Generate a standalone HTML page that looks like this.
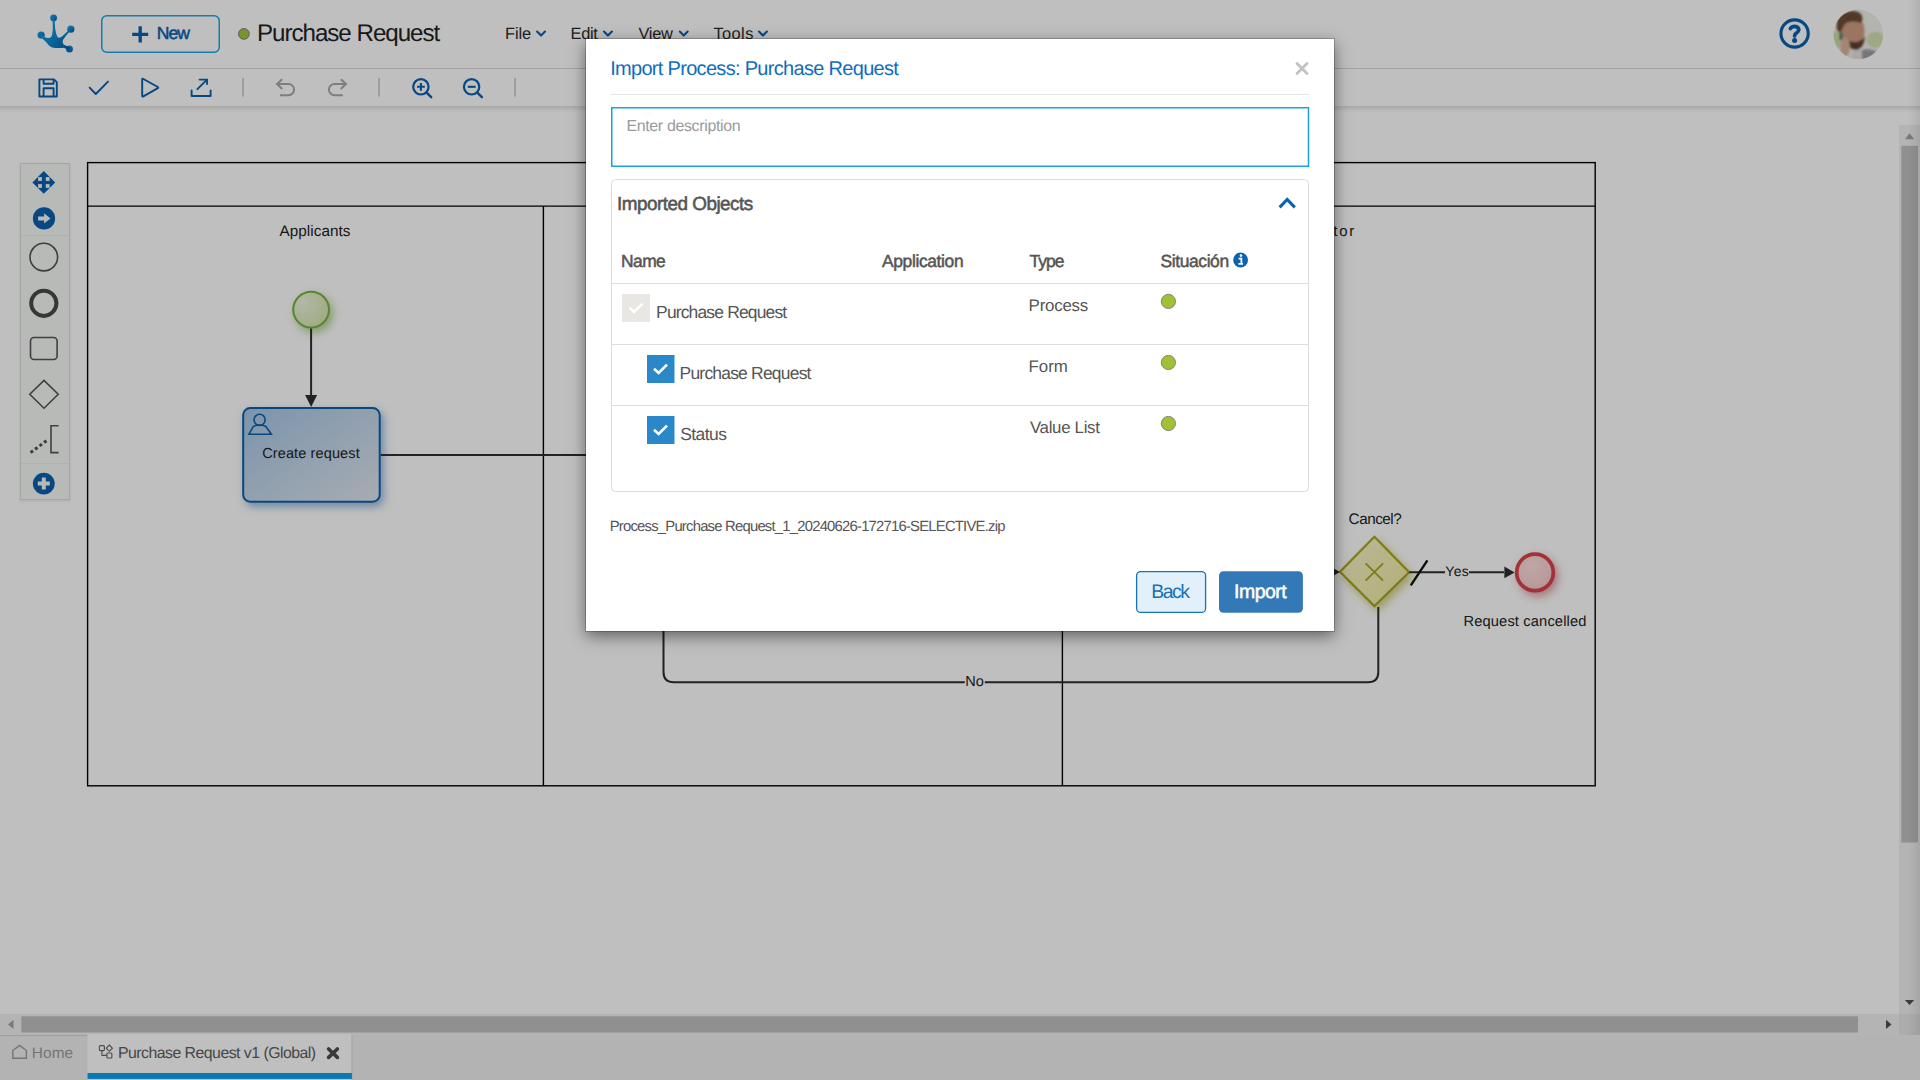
<!DOCTYPE html>
<html><head><meta charset="utf-8">
<style>
*{margin:0;padding:0;box-sizing:border-box}
html,body{width:1920px;height:1080px;overflow:hidden;background:#fff}
svg{position:absolute;left:0;top:0;font-family:"Liberation Sans",sans-serif}
text{text-rendering:geometricPrecision}
#tbsh{position:absolute;left:0;top:106px;width:1920px;height:6px;background:linear-gradient(rgba(0,0,0,.12),rgba(0,0,0,0))}
#pal{position:absolute;left:20px;top:163px;width:50px;height:337px;box-shadow:0 1px 3px rgba(0,0,0,.1)}
#ov{position:absolute;left:0;top:0;width:1920px;height:1080px;background:rgba(0,0,0,.25)}
#md{position:absolute;left:586px;top:39px;width:748px;height:592px;background:#fff;box-shadow:0 5px 15px rgba(0,0,0,.5);outline:1px solid rgba(0,0,0,.2)}
</style></head><body>
<div id="pal"></div>
<svg width="1920" height="1080" viewBox="0 0 1920 1080">
<rect x="0" y="0" width="1920" height="68" fill="#fff"/>
<rect x="0" y="68" width="1920" height="1" fill="#d9d9d9"/>
<g transform="translate(25,5)">
<defs><linearGradient id="lg" x1="0" y1="0" x2="1" y2="1"><stop offset="0" stop-color="#22a6e6"/><stop offset="0.55" stop-color="#0a86cc"/><stop offset="1" stop-color="#0a4f9e"/></linearGradient></defs>
<g fill="url(#lg)">
<circle cx="28.6" cy="13" r="3.4"/><circle cx="16.1" cy="30" r="3.6"/><circle cx="45.8" cy="24.2" r="3.6"/><circle cx="44.4" cy="43.9" r="3.5"/>
<path d="M27.6 15 L27.8 22 Q27.7 29 26.5 31.5 Q25 33.5 22 33 Q19.5 32.5 17 29.5 L15.5 32 Q19 35 21.5 37.5 Q24.5 42 28.5 42.8 Q33 43.3 38.5 42.8 Q42 43.5 43.5 46.5 L45.5 42 Q41.5 41 38.5 39.5 Q36.8 37.5 38 35 Q40 31.5 44.5 26.5 L46.5 23 Q41 27.5 37 31.5 Q34.5 33.5 32.5 32 Q31.3 30 30.2 24 L29.6 15 Z"/>
</g></g>
<rect x="101.75" y="15.75" width="117.5" height="36.5" rx="5" fill="none" stroke="#18a8e8" stroke-width="1.5"/>
<path d="M132.2 34.4 H148.2 M140.2 26.3 V42.5" stroke="#0a5fae" stroke-width="3.3" stroke-linecap="butt" fill="none"/>
<text x="156.76" y="39.20" font-size="17.59" fill="#0a5fae" stroke="#0a5fae" stroke-width="0.5" textLength="33.20" lengthAdjust="spacing">New</text>
<circle cx="243.9" cy="33.9" r="5.4" fill="#a2c53c" stroke="#777" stroke-width="0.9"/>
<text x="256.92" y="40.70" font-size="24.13" fill="#222" textLength="183.36" lengthAdjust="spacing">Purchase Request</text>
<text x="505.05" y="38.80" font-size="16.42" fill="#2b2b2b" textLength="26.08" lengthAdjust="spacing">File</text>
<path d="M537.0999999999999 31.6 L541.05 35.6 L545.0 31.6" fill="none" stroke="#0a5fae" stroke-width="2.1" stroke-linecap="round" stroke-linejoin="round"/>
<text x="570.55" y="38.80" font-size="16.42" fill="#2b2b2b" textLength="27.37" lengthAdjust="spacing">Edit</text>
<path d="M604.0 31.6 L607.95 35.6 L611.9000000000001 31.6" fill="none" stroke="#0a5fae" stroke-width="2.1" stroke-linecap="round" stroke-linejoin="round"/>
<text x="638.53" y="38.80" font-size="16.42" fill="#2b2b2b" textLength="34.33" lengthAdjust="spacing">View</text>
<path d="M679.8 31.6 L683.75 35.6 L687.7 31.6" fill="none" stroke="#0a5fae" stroke-width="2.1" stroke-linecap="round" stroke-linejoin="round"/>
<text x="713.43" y="38.80" font-size="16.42" fill="#2b2b2b" textLength="39.96" lengthAdjust="spacing">Tools</text>
<path d="M759.0 31.6 L762.95 35.6 L766.9000000000001 31.6" fill="none" stroke="#0a5fae" stroke-width="2.1" stroke-linecap="round" stroke-linejoin="round"/>
<circle cx="1794.6" cy="33.5" r="13.65" fill="none" stroke="#0a5fae" stroke-width="3.1"/>
<path d="M1790.4 28.6 Q1791.8 26.4 1794.7 26.4 Q1798.6 26.6 1798.8 29.8 Q1798.8 31.6 1796.6 32.9 Q1794.6 34 1794.6 36" fill="none" stroke="#0a5fae" stroke-width="3.7" stroke-linecap="round"/>
<circle cx="1794.6" cy="40.6" r="2.5" fill="#0a5fae"/>
<defs><clipPath id="av"><circle cx="1858.3" cy="34.3" r="24.8"/></clipPath><filter id="bl" x="-20%" y="-20%" width="140%" height="140%"><feGaussianBlur stdDeviation="1.1"/></filter></defs>
<g clip-path="url(#av)"><rect x="1830" y="6" width="56" height="56" fill="#f0efea"/>
<g filter="url(#bl)">
<ellipse cx="1876" cy="40" rx="9" ry="8" fill="#d3e0ae"/>
<ellipse cx="1836.5" cy="40" rx="4.5" ry="9" fill="#cbdca6"/>
<path d="M1858 64 L1862 50 Q1870 48 1878 52 L1882 60 L1878 66 Z" fill="#9c9ea3"/>
<path d="M1850 64 L1853 50 L1862 49 L1862 64 Z" fill="#e6e0dc"/>
<ellipse cx="1853" cy="31" rx="11.5" ry="15" fill="#cf9c80"/>
<path d="M1837 30 Q1835 16 1846 12 Q1856 9 1861 14 Q1864 19 1861 23 Q1853 20 1846 23 Q1842 27 1841 34 Z" fill="#6f4b35"/>
<path d="M1844 38 Q1848 50 1856 50 Q1864 49 1865 36 Q1861 42 1855 42 Q1849 42 1844 38Z" fill="#5b4030"/>
<ellipse cx="1845" cy="47" rx="5" ry="10" fill="#dbb39c"/>
<rect x="1839.5" y="33" width="3" height="7" fill="#4b7360"/>
</g></g>
<rect x="0" y="69" width="1920" height="37" fill="#fff"/>
<g fill="none" stroke="#0a5fae" stroke-width="1.9" stroke-linejoin="round" stroke-linecap="round">
<path d="M39.4 79.4 H54 L56.8 82.2 V96.5 H39.4 Z"/>
<path d="M43.6 79.6 V83.8 H53.6 V79.6"/><path d="M43.6 96.3 V88.2 H53.6 V96.3"/>
<path d="M89.6 87.6 L95.8 94 L108 81.6"/>
<path d="M142.2 79.4 Q142 78.2 143.4 79 L157.8 87 Q158.8 87.6 157.8 88.2 L143.4 96.4 Q142.2 97 142.2 95.8 Z"/>
<path d="M191.6 90.4 V96 H210.6 V90.4"/><path d="M197.4 89.2 L207 79.6"/><path d="M199.6 79.6 H207 V84"/>
<circle cx="420.9" cy="86.8" r="7.7" stroke-width="2.2"/><path d="M426.6 92.6 L431.2 97.2" stroke-width="2.4"/><path d="M417 86.8 H424.8 M420.9 82.9 V90.7" stroke-width="2.1" stroke-linecap="butt"/>
<circle cx="471.6" cy="86.8" r="7.7" stroke-width="2.2"/><path d="M477.3 92.6 L481.9 97.2" stroke-width="2.4"/><path d="M467.8 86.8 H475.6" stroke-width="2.1" stroke-linecap="butt"/>
</g>
<g fill="none" stroke="#a9a9a9" stroke-width="2" stroke-linecap="butt">
<path d="M276.6 84 H288.5 A5.6 5.6 0 0 1 288.5 95.2 H280"/><path d="M282.2 79.2 L277 84 L282.2 89"/>
<path d="M346.4 84 H334.5 A5.6 5.6 0 0 0 334.5 95.2 H342.8"/><path d="M340.8 79.2 L346 84 L340.8 89"/>
</g>
<g stroke="#d2d2d2" stroke-width="2"><path d="M243 78.2 V96.6 M379 78.2 V96.6 M515 78.2 V96.6"/></g>
<rect x="20.5" y="163.5" width="49" height="336" fill="#f6f8f6" stroke="#dcdedc" stroke-width="1"/>
<path d="M21 235.5 H69 M21 463.5 H69" stroke="#ececec" stroke-width="1"/>
<g fill="#0a5fae">
<path d="M43.8 171 L55.2 182.4 L43.8 193.8 L32.4 182.4 Z"/>
<circle cx="44" cy="218.4" r="11.1"/>
<circle cx="43.8" cy="483.6" r="10.9"/>
</g>
<g fill="#f6f8f6">
<rect x="38.1" y="177.1" width="3.8" height="3.8"/><rect x="45.8" y="177.1" width="3.8" height="3.8"/>
<rect x="38.1" y="184.1" width="3.8" height="3.8"/><rect x="45.8" y="184.1" width="3.8" height="3.8"/>
<path d="M38.1 216.4 H44.1 V213.2 L50.4 218.4 L44.1 223.6 V220.5 H38.1 Z"/>
<path d="M41.8 477.6 H45.8 V481.6 H49.8 V485.6 H45.8 V489.6 H41.8 V485.6 H37.8 V481.6 H41.8 Z"/>
</g>
<g fill="none" stroke="#555" stroke-width="1.6">
<circle cx="43.8" cy="257.1" r="13.8"/>
<rect x="30.5" y="337.5" width="26.6" height="22" rx="3.5"/>
<path d="M44 380.4 L58.2 394.3 L44 408.2 L29.8 394.3 Z"/>
<path d="M58.6 425.8 H51 V452.6 H58.6"/>
</g>
<circle cx="43.8" cy="303.3" r="12.6" fill="none" stroke="#4a4a4a" stroke-width="4"/>
<path d="M30.6 452.6 L48.2 439.4" stroke="#505050" stroke-width="3" stroke-dasharray="3 2.6"/>
<g fill="none" stroke="#000" stroke-width="1.4"><rect x="87.6" y="162.6" width="1507.6" height="623.2"/><path d="M87.6 206.1 H1595.2 M543.4 206.1 V785.8 M1062.4 206.1 V785.8"/></g>
<text x="279.57" y="235.60" font-size="15.26" fill="#222" textLength="70.88" lengthAdjust="spacing">Applicants</text>
<text x="1333.37" y="235.80" font-size="14.97" fill="#222" textLength="20.88" lengthAdjust="spacing">tor</text>
<defs>
<radialGradient id="sg" cx="0.3" cy="0.3" r="0.9"><stop offset="0" stop-color="#eef5dc"/><stop offset="1" stop-color="#d2e3a8"/></radialGradient>
<linearGradient id="tg" x1="0" y1="0" x2="1" y2="1"><stop offset="0" stop-color="#a6c6e6"/><stop offset="1" stop-color="#dfe6ee"/></linearGradient>
<linearGradient id="gg" x1="0" y1="0" x2="1" y2="1"><stop offset="0" stop-color="#f8f6cf"/><stop offset="1" stop-color="#f0ea9c"/></linearGradient>
<radialGradient id="eg" cx="0.4" cy="0.35" r="0.8"><stop offset="0" stop-color="#fde1df"/><stop offset="1" stop-color="#f3c5c4"/></radialGradient>
<filter id="shg" x="-50%" y="-50%" width="200%" height="200%"><feGaussianBlur in="SourceAlpha" stdDeviation="4.5" result="b"/><feOffset in="b" dx="3" dy="4" result="o"/><feFlood flood-color="#7cb342" flood-opacity="0.6"/><feComposite in2="o" operator="in" result="s"/><feMerge><feMergeNode in="s"/><feMergeNode in="SourceGraphic"/></feMerge></filter><filter id="shb" x="-50%" y="-50%" width="200%" height="200%"><feGaussianBlur in="SourceAlpha" stdDeviation="4.5" result="b"/><feOffset in="b" dx="3" dy="4" result="o"/><feFlood flood-color="#3a7cc0" flood-opacity="0.55"/><feComposite in2="o" operator="in" result="s"/><feMerge><feMergeNode in="s"/><feMergeNode in="SourceGraphic"/></feMerge></filter><filter id="shy" x="-50%" y="-50%" width="200%" height="200%"><feGaussianBlur in="SourceAlpha" stdDeviation="4.5" result="b"/><feOffset in="b" dx="3" dy="4" result="o"/><feFlood flood-color="#b5b030" flood-opacity="0.6"/><feComposite in2="o" operator="in" result="s"/><feMerge><feMergeNode in="s"/><feMergeNode in="SourceGraphic"/></feMerge></filter><filter id="shr" x="-50%" y="-50%" width="200%" height="200%"><feGaussianBlur in="SourceAlpha" stdDeviation="4.5" result="b"/><feOffset in="b" dx="3" dy="4" result="o"/><feFlood flood-color="#c0404a" flood-opacity="0.5"/><feComposite in2="o" operator="in" result="s"/><feMerge><feMergeNode in="s"/><feMergeNode in="SourceGraphic"/></feMerge></filter>
</defs>
<circle cx="311.1" cy="309.6" r="17.9" fill="url(#sg)" stroke="#78b144" stroke-width="2" filter="url(#shg)"/>
<path d="M311.1 328.5 V396" stroke="#2e2e2e" stroke-width="2"/><path d="M305.1 395 L317.1 395 L311.1 407 Z" fill="#2e2e2e"/>
<rect x="243.2" y="408.1" width="136.5" height="93.6" rx="7" fill="url(#tg)" stroke="#0d5fa8" stroke-width="2" filter="url(#shb)"/>
<g fill="none" stroke="#0d5fa8" stroke-width="1.6"><circle cx="259.6" cy="419.8" r="5.6"/><path d="M248.9 434.2 L253.4 426.4 Q259.6 423.6 265.8 426.4 L271.4 434.2 Z"/></g>
<text x="262.16" y="457.80" font-size="14.53" fill="#222" textLength="97.54" lengthAdjust="spacing">Create request</text>
<path d="M380.7 455 H600" stroke="#2e2e2e" stroke-width="2"/>
<path d="M1374.4 536.7 L1409.1 572.2 L1374.4 606.1 L1340 571.7 Z" fill="url(#gg)" stroke="#a8a61a" stroke-width="2.2" filter="url(#shy)"/>
<path d="M1365.6 563.3 L1383.1 580.6 M1383.1 563.3 L1365.6 580.6" stroke="#a8a61a" stroke-width="1.8"/>
<path d="M1320 572 H1334" stroke="#2e2e2e" stroke-width="2"/><path d="M1330 566.5 L1340 572 L1330 577.5 Z" fill="#2e2e2e"/>
<path d="M1409.1 572.2 H1445 M1469 572.2 H1504" stroke="#2e2e2e" stroke-width="2"/><path d="M1504.4 566.4 L1514.6 572.4 L1504.4 578.2 Z" fill="#2e2e2e"/>
<path d="M1410.8 585.3 L1427.4 560.3" stroke="#111" stroke-width="2.4"/>
<text x="1445.29" y="575.60" font-size="13.95" fill="#222" textLength="23.51" lengthAdjust="spacing">Yes</text>
<text x="1348.62" y="523.60" font-size="15.26" fill="#222" textLength="53.04" lengthAdjust="spacing">Cancel?</text>
<circle cx="1535" cy="572.4" r="18.3" fill="url(#eg)" stroke="#d9424b" stroke-width="3.7" filter="url(#shr)"/>
<text x="1463.40" y="625.60" font-size="14.68" fill="#222" textLength="123.05" lengthAdjust="spacing">Request cancelled</text>
<path d="M1378.3 607 V672 Q1378.3 682.3 1368 682.3 H674 Q663.5 682.3 663.5 672 V600" fill="none" stroke="#2e2e2e" stroke-width="2"/>
<rect x="964.8" y="675" width="20" height="12" fill="#fff"/>
<text x="965.21" y="686.00" font-size="14.53" fill="#222" textLength="18.60" lengthAdjust="spacing">No</text>
<rect x="1899" y="125" width="21" height="889" fill="#f1f1f1"/>
<rect x="1901.3" y="145.8" width="16.7" height="696.7" fill="#c1c1c1"/>
<path d="M1905 139.2 L1909.6 133.3 L1914.2 139.2 Z" fill="#a3a3a3"/>
<path d="M1904.9 999.9 L1914.2 999.9 L1909.55 1005 Z" fill="#505050"/>
<rect x="0" y="1014" width="1899" height="21" fill="#f1f1f1"/>
<rect x="21.3" y="1016.3" width="1836.7" height="16.2" fill="#c1c1c1"/>
<path d="M13.5 1019.8 L8 1024.4 L13.5 1029 Z" fill="#a3a3a3"/>
<path d="M1886 1019.8 L1891.5 1024.4 L1886 1029 Z" fill="#505050"/>
<rect x="1899" y="1014" width="21" height="21" fill="#e6e6e6"/>
<rect x="0" y="1035" width="1920" height="45" fill="#efefef"/>
<rect x="0" y="1035" width="87.5" height="1.2" fill="#d6d6d6"/>
<rect x="87.5" y="1034.4" width="264" height="45.6" fill="#fff"/>
<rect x="351.5" y="1035" width="1" height="45" fill="#dedede"/>
<rect x="87.5" y="1073" width="264.4" height="5.9" fill="#0aa3f0"/>
<g fill="none" stroke="#9c9c9c" stroke-width="1.4"><path d="M12.8 1050.5 L19.6 1045.4 L26.4 1050.5 V1058.3 H12.8 Z"/></g>
<text x="31.84" y="1057.80" font-size="15.41" fill="#9c9c9c" textLength="41.35" lengthAdjust="spacing">Home</text>
<g fill="none" stroke="#666" stroke-width="1.1"><rect x="99.4" y="1045.6" width="5" height="5" rx="1"/><path d="M109.3 1045 L112.4 1048.2 L109.3 1051.3 L106.2 1048.2 Z"/><rect x="106.9" y="1053" width="5" height="5" rx="1"/><path d="M101.9 1050.6 V1055.4 H106.9"/></g>
<text x="118.00" y="1057.70" font-size="15.84" fill="#5e5e5e" textLength="198.08" lengthAdjust="spacing">Purchase Request v1 (Global)</text>
<path d="M328.6 1049 L337.4 1057.4 M337.4 1049 L328.6 1057.4" stroke="#4d4d4d" stroke-width="3.6" stroke-linecap="round"/>
</svg>
<div id="tbsh"></div>
<div style="position:absolute;left:1908px;top:0;width:12px;height:1035px;background:linear-gradient(to right,rgba(0,0,0,0),rgba(0,0,0,.08))"></div>
<div id="ov"></div>
<div id="md"></div>
<svg width="1920" height="1080" viewBox="0 0 1920 1080">
<rect x="586" y="39" width="748" height="592" fill="#fff"/>
<text x="610.16" y="75.00" font-size="19.99" fill="#0f6dbd" textLength="288.74" lengthAdjust="spacing">Import Process: Purchase Request</text>
<path d="M1297 63.6 L1307 73.6 M1307 63.6 L1297 73.6" stroke="#c2c2c2" stroke-width="2.8" stroke-linecap="round"/>
<rect x="611" y="94" width="698" height="1" fill="#e6e6e6"/>
<rect x="611.75" y="107.75" width="696.75" height="58.5" fill="#fff" stroke="#19a0e0" stroke-width="1.5"/>
<text x="626.39" y="131.00" font-size="15.99" fill="#9b9b9b" textLength="114.25" lengthAdjust="spacing">Enter description</text>
<rect x="611.5" y="179.5" width="697" height="312" rx="4" fill="#fff" stroke="#dcdcdc" stroke-width="1"/>
<text x="617.01" y="210.00" font-size="18.90" fill="#555" stroke="#555" stroke-width="0.55" textLength="136.18" lengthAdjust="spacing">Imported Objects</text>
<path d="M1279.6 207.4 L1287.2 199.4 L1294.8 207.4" fill="none" stroke="#0a62b0" stroke-width="3"/>
<text x="621.07" y="267.00" font-size="17.44" fill="#555" stroke="#555" stroke-width="0.5" textLength="44.71" lengthAdjust="spacing">Name</text>
<text x="881.97" y="267.00" font-size="17.44" fill="#555" stroke="#555" stroke-width="0.5" textLength="81.67" lengthAdjust="spacing">Application</text>
<text x="1029.61" y="267.00" font-size="17.44" fill="#555" stroke="#555" stroke-width="0.5" textLength="34.92" lengthAdjust="spacing">Type</text>
<text x="1160.46" y="267.00" font-size="17.44" fill="#555" stroke="#555" stroke-width="0.5" textLength="68.67" lengthAdjust="spacing">Situación</text>
<circle cx="1240.6" cy="260" r="7.4" fill="#0a62b0"/>
<path d="M1238.6 258.6 H1241.4 V263.6 M1238.4 263.8 H1243" stroke="#fff" stroke-width="1.8" fill="none"/><circle cx="1241" cy="255.6" r="1.3" fill="#fff"/>
<rect x="612" y="283.0" width="696" height="1" fill="#dddddd"/>
<rect x="612" y="344.0" width="696" height="1" fill="#dddddd"/>
<rect x="612" y="405.0" width="696" height="1" fill="#dddddd"/>
<rect x="622" y="294" width="28" height="28" fill="#e8e7e3"/>
<path d="M629.5 307.8 L634 312 L642.5 303.6" fill="none" stroke="#fff" stroke-width="2.6"/>
<text x="656.07" y="318.10" font-size="17.44" fill="#555" textLength="131.06" lengthAdjust="spacing">Purchase Request</text>
<text x="1028.62" y="311.00" font-size="16.86" fill="#555" textLength="59.59" lengthAdjust="spacing">Process</text>
<rect x="647" y="355" width="27.5" height="28" fill="#2b88c8"/>
<path d="M654 368.8 L658.6 373 L667 364.6" fill="none" stroke="#fff" stroke-width="2.6"/>
<text x="679.57" y="379.20" font-size="17.44" fill="#555" textLength="131.86" lengthAdjust="spacing">Purchase Request</text>
<text x="1028.62" y="371.70" font-size="16.86" fill="#555" textLength="39.09" lengthAdjust="spacing">Form</text>
<rect x="647" y="416" width="27.5" height="28" fill="#2b88c8"/>
<path d="M654 429.8 L658.6 434 L667 425.6" fill="none" stroke="#fff" stroke-width="2.6"/>
<text x="680.21" y="440.00" font-size="17.44" fill="#555" textLength="46.72" lengthAdjust="spacing">Status</text>
<text x="1029.93" y="432.80" font-size="16.86" fill="#555" textLength="70.00" lengthAdjust="spacing">Value List</text>
<circle cx="1168.4" cy="301.4" r="7.1" fill="#a0c133" stroke="#7b7b7b" stroke-width="0.9"/>
<circle cx="1168.4" cy="362.5" r="7.1" fill="#a0c133" stroke="#7b7b7b" stroke-width="0.9"/>
<circle cx="1168.4" cy="423.5" r="7.1" fill="#a0c133" stroke="#7b7b7b" stroke-width="0.9"/>
<text x="609.68" y="530.80" font-size="14.83" fill="#555" textLength="395.74" lengthAdjust="spacing">Process_Purchase Request_1_20240626-172716-SELECTIVE.zip</text>
<rect x="1136.6" y="571.6" width="69" height="40.8" rx="4" fill="#e1f0fa" stroke="#1a72b9" stroke-width="1.3"/>
<text x="1151.20" y="598.00" font-size="19.48" fill="#1a6fb5" textLength="38.77" lengthAdjust="spacing">Back</text>
<rect x="1219" y="571.2" width="83.9" height="41.5" rx="4.5" fill="#3479b7"/>
<text x="1234.10" y="598.00" font-size="19.48" fill="#fff" stroke="#fff" stroke-width="0.5" textLength="52.54" lengthAdjust="spacing">Import</text>
</svg>
</body></html>
